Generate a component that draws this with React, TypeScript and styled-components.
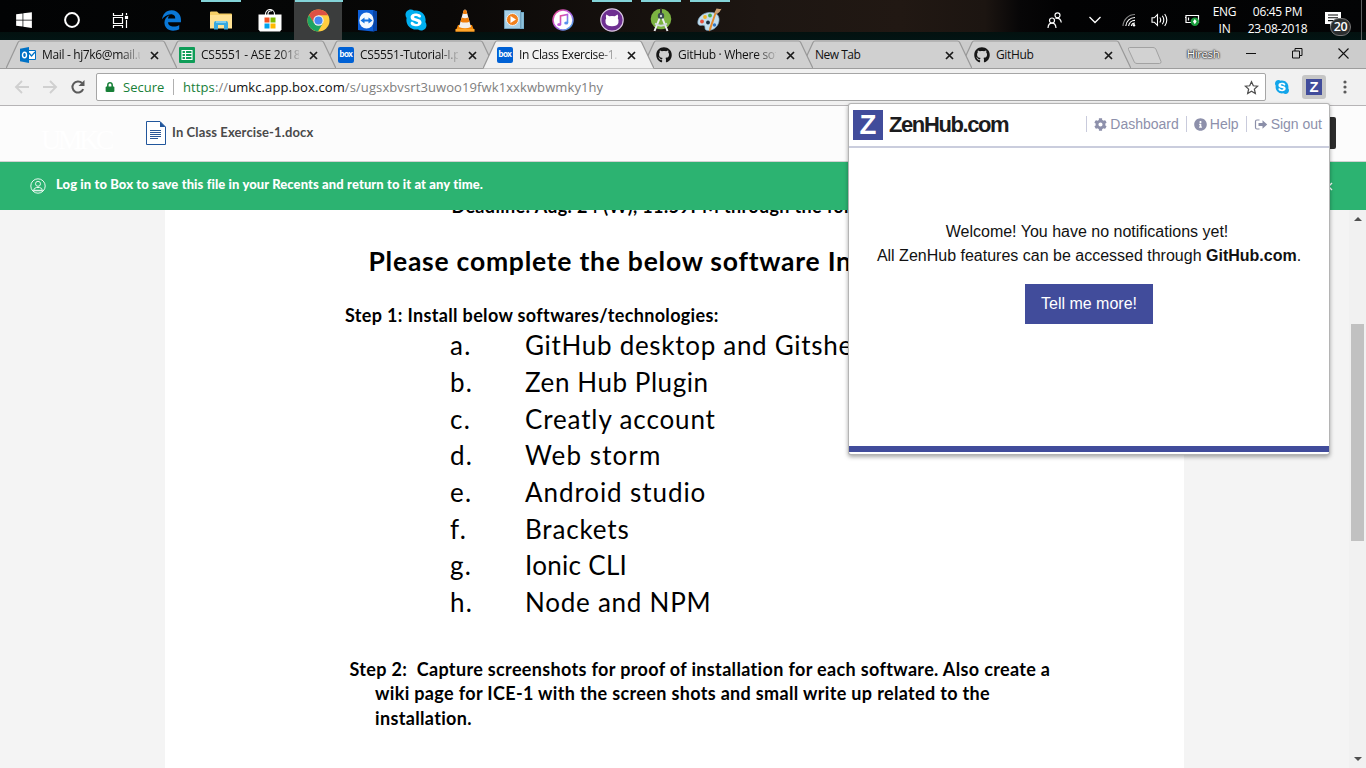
import React from 'react';
import styled, { createGlobalStyle } from 'styled-components';
import { FaGithub, FaSkype, FaEdgeLegacy, FaWindows, FaCog, FaInfoCircle, FaLock } from 'react-icons/fa';

const UI_FONT = "'Open Sans', 'Noto Sans', sans-serif";
const DOC_FONT = "Lato, 'Open Sans', sans-serif";
const POPUP_FONT = "'Liberation Sans', Arial, sans-serif";

const GlobalStyle = createGlobalStyle`
  * { box-sizing: border-box; }
  html, body { margin: 0; padding: 0; overflow: hidden; }
  svg { display: block; flex: none; }
`;

const Screen = styled.div`
  position: relative;
  width: 1366px;
  height: 768px;
  overflow: hidden;
  display: flex;
  flex-direction: column;
  background: #f4f4f4;
`;

/* ---------- Taskbar ---------- */

const Taskbar = styled.div`
  height: 40px;
  flex: none;
  display: flex;
  background:
    linear-gradient(#03110f, #021413) 0 32px / 100% 8px no-repeat,
    linear-gradient(90deg, #020304 0, #050606 300px, #0a0807 450px, #15100d 620px, #1d1612 760px, #211813 900px, #1c1511 985px, #070607 1020px, #020203 1060px, #030405 100%);
`;

const TaskButton = styled.div<{ $w?: number; $gap?: number; $active?: boolean }>`
  width: ${(p) => p.$w ?? 48.9}px;
  flex: none;
  margin-left: ${(p) => p.$gap ?? 0}px;
  height: 40px;
  display: flex;
  flex-direction: column;
  align-items: center;
  background: ${(p) => (p.$active ? 'linear-gradient(90deg, #3b3d3d 48px, transparent 48px)' : 'none')};
`;

const RunningMark = styled.div<{ $on?: boolean; $full?: boolean }>`
  width: ${(p) => (p.$full ? 48 : 40)}px;
  height: 2px;
  background: ${(p) => (p.$on ? '#83d3d8' : 'transparent')};
`;

const TaskIcon = styled.div`
  flex: 1;
  display: flex;
  align-items: center;
  padding-bottom: 2px;
`;

const Tray = styled.div`
  margin-left: auto;
  width: 331px;
  display: flex;
  align-items: center;
  color: #fff;
`;

const TraySlot = styled.div<{ $w: number }>`
  width: ${(p) => p.$w}px;
  display: flex;
  justify-content: center;
`;

const TrayText = styled.div<{ $w: number; $ls: number }>`
  width: ${(p) => p.$w}px;
  font: 12px/17px ${UI_FONT};
  letter-spacing: ${(p) => p.$ls}px;
  text-align: center;
  white-space: nowrap;
  padding-bottom: 1px;
`;

const Notify = styled.div`
  position: relative;
  width: 43px;
  height: 40px;
  padding: 12px 0 0 10px;
`;

const Badge = styled.div`
  position: absolute;
  left: 15px;
  top: 18px;
  width: 21px;
  height: 18px;
  border: 1px solid #777;
  border-radius: 9px;
  background: #2b2e2f;
  color: #fff;
  font: 600 12.5px/16px ${UI_FONT};
  letter-spacing: -0.3px;
  text-align: center;
`;

const ShowDesktop = styled.div`
  width: 5px;
  height: 40px;
  margin-left: auto;
  border-left: 1px solid #5b5f60;
`;

/* ---------- Browser tabs ---------- */

const TabStrip = styled.div`
  height: 29px;
  flex: none;
  display: flex;
  padding-left: 6px;
  background: linear-gradient(transparent 28px, #9d9d9d 28px), #cccccc;
`;

const TabBox = styled.div<{ $z: number }>`
  position: relative;
  z-index: ${(p) => p.$z};
  width: 171px;
  height: 29px;
  margin-right: -12px;
  flex: none;
  display: flex;
  align-items: center;
  padding: 1px 0 0 14px;
`;

const TabShape = styled.svg`
  position: absolute;
  inset: 0;
  z-index: -1;
`;

const TabTitle = styled.div<{ $noIcon?: boolean; $fade?: boolean; $ls?: number }>`
  width: ${(p) => (p.$noIcon ? 119 : 98)}px;
  margin-left: ${(p) => (p.$noIcon ? 0 : 6)}px;
  overflow: hidden;
  white-space: nowrap;
  font: 12px/18px ${UI_FONT};
  letter-spacing: ${(p) => p.$ls ?? -0.25}px;
  color: #111;
  mask-image: ${(p) => (p.$fade ? 'linear-gradient(90deg, #000 78px, transparent 101px)' : 'none')};
`;

const TabClose = styled.svg`
  margin-left: auto;
  margin-right: 18.5px;
`;

const BoxLogo = styled.div`
  width: 16px;
  height: 16px;
  border-radius: 2px;
  background: #0061d5;
  color: #fff;
  font: 900 8.5px/14px ${DOC_FONT};
  letter-spacing: -0.3px;
  text-align: center;
`;

const WindowControls = styled.div`
  margin-left: auto;
  display: flex;
  align-items: center;
  height: 28px;
  padding: 0 18px 1px 0;
`;

const ProfileName = styled.div`
  width: 40px;
  margin-right: 23px;
  font: 11.5px/16px ${UI_FONT};
  letter-spacing: -0.4px;
  text-align: center;
  color: #fff;
  text-shadow: 0 0 2px #222, 0 0 2px #222, 0 0 1px #222;
`;

const ControlSlot = styled.div<{ $w: number }>`
  width: ${(p) => p.$w}px;
  display: flex;
  justify-content: center;
`;

/* ---------- Browser toolbar ---------- */

const Toolbar = styled.div`
  height: 37px;
  flex: none;
  display: flex;
  align-items: center;
  background: #f1f1f1;
  border-bottom: 1px solid #b6b4b6;
`;

const NavButtons = styled.div`
  width: 96px;
  display: flex;
  align-items: center;
  gap: 12px;
  padding-left: 14px;
`;

const AddressBar = styled.div`
  width: 1170px;
  height: 28px;
  display: flex;
  align-items: center;
  border: 1px solid #a6a6a6;
  border-radius: 2px;
  background: #fff;
  padding: 0 6px 0 8px;
  font: 13px/20px ${UI_FONT};
`;

const Secure = styled.span`
  margin-left: 8px;
  width: 50px;
  color: #188038;
`;

const Url = styled.span`
  flex: 1;
  border-left: 1px solid #b0b0b0;
  line-height: 16px;
  padding-left: 9px;
  color: #808080;
  letter-spacing: 0.1px;
  white-space: nowrap;
`;

const UrlScheme = styled.span`
  color: #188038;
`;

const UrlHost = styled.span`
  color: #111;
`;

const Extensions = styled.div`
  display: flex;
  align-items: center;
  padding-left: 8px;
`;

const ZenButton = styled.div`
  width: 24px;
  height: 24px;
  margin: 0 17px 0 12px;
  border-radius: 3px;
  background: #c6c6c6;
  display: flex;
  align-items: center;
  justify-content: center;
`;

const ZenLogo = styled.div<{ $size: number }>`
  width: ${(p) => p.$size}px;
  height: ${(p) => p.$size}px;
  background: #414c9b;
  color: #fff;
  font: bold ${(p) => p.$size * 0.92}px/${(p) => p.$size}px ${POPUP_FONT};
  text-align: center;
`;

/* ---------- File viewer ---------- */

const FileHeader = styled.div`
  height: 56px;
  flex: none;
  display: flex;
  align-items: center;
  padding: 0 30px 1px 41px;
  background: #fcfcfc;
  border-bottom: 1px solid #d2d2d2;
`;

const Wordmark = styled.div`
  width: 105px;
  padding-top: 14px;
  font: 28px/28px 'Liberation Serif', serif;
  letter-spacing: -3.5px;
  color: #fff;
`;

const FileName = styled.div`
  margin-left: 6px;
  padding-bottom: 2px;
  font: bold 13px/18px ${DOC_FONT};
  letter-spacing: 0.12px;
  color: #4a4a4a;
`;

const HeaderAction = styled.div`
  width: 60px;
  height: 32px;
  margin-left: auto;
  border-radius: 2px;
  background: #2c2c2c;
`;

const LoginBanner = styled.div`
  height: 48px;
  flex: none;
  display: flex;
  align-items: center;
  padding: 0 33px 0 30px;
  background: #2cb371;
  color: #fff;
`;

const BannerText = styled.div`
  flex: 1;
  margin-left: 10px;
  padding-bottom: 4px;
  font: 900 13px/18px ${DOC_FONT};
  letter-spacing: 0.1px;
`;

const Viewer = styled.div`
  height: 558px;
  flex: none;
  display: flex;
  padding-left: 165px;
  overflow: hidden;
`;

const Page = styled.div`
  width: 1019px;
  height: 558px;
  overflow: hidden;
  background: #fff;
  color: #000;
  font-family: ${DOC_FONT};
`;

const Strong = styled.div<{ $left: number; $top?: number }>`
  margin: ${(p) => p.$top ?? 0}px 0 0 ${(p) => p.$left}px;
  font-size: 18px;
  font-weight: bold;
  line-height: 24.5px;
  letter-spacing: 0.34px;
  white-space: pre;
`;

const Heading = styled.div`
  margin: 26px 0 0 203.5px;
  font-size: 26.5px;
  font-weight: bold;
  line-height: 32px;
  letter-spacing: 0.76px;
  white-space: nowrap;
`;

const Item = styled.div`
  display: flex;
  margin-left: 285px;
  font-size: 26px;
  line-height: 36.68px;
  white-space: nowrap;
`;

const Letter = styled.span`
  width: 75px;
  letter-spacing: 1.2px;
`;

const ItemText = styled.span<{ $ls: number }>`
  letter-spacing: ${(p) => p.$ls}px;
`;

const Scrollbar = styled.div`
  width: 17px;
  margin-left: auto;
  display: flex;
  flex-direction: column;
  align-items: center;
  justify-content: space-between;
  background: #f1f1f1;
  padding: 7px 0;
`;

const Thumb = styled.div`
  width: 13px;
  height: 217px;
  margin: 103px 0 216px;
  background: #c1c1c1;
`;

/* ---------- ZenHub popup ---------- */

const Popup = styled.div`
  position: absolute;
  z-index: 20;
  left: 849px;
  top: 104px;
  width: 480px;
  height: 350px;
  display: flex;
  flex-direction: column;
  background: #fff;
  border-radius: 2px;
  box-shadow: 0 0 0 1px #b4b4b4, 0 2px 4px 1px rgba(0, 0, 0, 0.35);
  font-family: ${POPUP_FONT};
`;

const PopupHeader = styled.div`
  height: 44px;
  display: flex;
  align-items: center;
  padding: 0 7px 0 4px;
  border-bottom: 2px solid #cacddd;
`;

const Brand = styled.div`
  margin-left: 6px;
  flex: 1;
  font-size: 22px;
  line-height: 30px;
  font-weight: bold;
  letter-spacing: -1.4px;
  color: #1c1c1e;
`;

const PopupLink = styled.div`
  display: flex;
  align-items: center;
  gap: 3px;
  height: 16px;
  margin: 0 0 2px 7px;
  padding-left: 7px;
  border-left: 1px solid #c9cbdc;
  font-size: 14px;
  color: #8d90ab;
  white-space: nowrap;
`;

const PopupBody = styled.div`
  flex: 1;
  display: flex;
  flex-direction: column;
  align-items: center;
  padding-top: 72px;
  font-size: 16px;
  line-height: 24px;
  color: #111;
`;

const Welcome = styled.div`
  padding-right: 4px;
`;

const PopupButton = styled.div`
  width: 128px;
  height: 40px;
  margin-top: 16px;
  background: #414c9b;
  color: #fff;
  line-height: 39px;
  text-align: center;
`;

const PopupFooter = styled.div`
  height: 6px;
  margin-bottom: 2px;
  background: #414c9b;
`;

/* ---------- Icons ---------- */

const Cortana = () => (
  <svg width="18" height="18" viewBox="0 0 18 18"><circle cx="9" cy="9" r="6.9" fill="none" stroke="#fff" strokeWidth="2" /></svg>
);

const TaskView = () => (
  <svg width="17" height="17" viewBox="0 0 17 17" fill="none" stroke="#fff" strokeWidth="1.2">
    <path d="M1.5 1v2.500h9V1M1.500 16v-2.500h9V16M1.500 5.500h9v6h-9zM14.500 1v2M14.500 8v8" />
    <rect x="13.500" y="4.500" width="2" height="2" fill="#fff" />
  </svg>
);

const Explorer = () => (
  <svg width="22" height="19" viewBox="0 0 22 19">
    <path d="M0 1.500Q0 .5 1 .5h6l2 2h12q1 0 1 1V17H0z" fill="#f5cf66" />
    <path d="M0 4h22v13.500H0z" fill="#ffe293" />
    <path d="M4 18.500V12q0-2 2-2h10q2 0 2 2v6.500h-4V14H8v4.500z" fill="#36a9e0" />
    <path d="M6 10h10v2H6z" fill="#7bcdf0" />
  </svg>
);

const Store = () => (
  <svg width="24" height="23" viewBox="0 0 24 23">
    <path d="M7.500 7V5a4 4 0 0 1 9 0v2M10 7V4.500a3 3 0 0 1 4-2.500" fill="none" stroke="#fff" strokeWidth="1.100" />
    <path d="M.5 5.500h23V20.500l-1.500 2H2l-1.500-2z" fill="#fff" />
    <path d="M6.500 8.500h5v5h-5z" fill="#f25022" /><path d="M12.500 8.500h5v5h-5z" fill="#7fba00" />
    <path d="M6.500 14.500h5v5h-5z" fill="#00a4ef" /><path d="M12.500 14.500h5v5h-5z" fill="#ffb900" />
  </svg>
);

const Chrome = () => (
  <svg width="23" height="23" viewBox="0 0 24 24">
    <circle cx="12" cy="12" r="11.500" fill="#ffcd40" />
    <path d="M12 6.500h10.100A11.500 11.500 0 0 0 2.040 6.250L7.300 15z" fill="#dd5144" />
    <path d="M2.040 6.250A11.500 11.500 0 0 0 11.500 23.500L16.700 14.700H7.300z" fill="#1da462" />
    <circle cx="12" cy="12" r="5.400" fill="#f1f1f1" /><circle cx="12" cy="12" r="4.200" fill="#4688f1" />
  </svg>
);

const TeamViewer = () => (
  <svg width="21" height="23" viewBox="0 0 21 23">
    <path d="M1 1h15l4 1.500v19l-4 1L1 21z" fill="#0d5fd8" /><path d="M16 1l4 1.500v19l-4 1z" fill="#0745a8" />
    <ellipse cx="9.500" cy="11.500" rx="7.200" ry="8" fill="#f4f9ff" />
    <path d="M3.500 11.500l4-3v2h4v-2l4 3-4 3v-2h-4v2z" fill="#1271e0" />
  </svg>
);

const SkypeBacking = styled.div<{ $size: number }>`
  display: flex;
  justify-content: center;
  background: radial-gradient(circle, #fff ${(p) => p.$size * 0.36}px, transparent ${(p) => p.$size * 0.38}px);
`;

const Skype = ({ size, color }: { size: number; color: string }) => (
  <SkypeBacking $size={size}><FaSkype size={size} color={color} /></SkypeBacking>
);

const Vlc = () => (
  <svg width="20" height="23" viewBox="0 0 20 23">
    <path d="M3 16h14l2.500 6.500H.5z" fill="#f58a0c" /><path d="M.5 20h19v2.500H.5z" fill="#ffa62b" />
    <path d="M10 .5q1.200 0 1.600 1.500L16 18q-6 2.500-12 0L8.400 2Q8.800.5 10 .5z" fill="#f3f0ee" />
    <path d="M8.400 2q1.600-2.500 3.200 0l.6 2.500q-2.200 1-4.400 0zM6.700 8.500q3.300 1.500 6.600 0l1.200 4.200q-4.500 1.800-9 0z" fill="#ef7d0b" />
  </svg>
);

const Movies = () => (
  <svg width="20" height="20" viewBox="0 0 20 20">
    <path d="M4 2h16v17H4z" fill="#6ba5c4" /><path d="M.5 0.500h16v18H.5z" fill="#a8d0e6" stroke="#6f9fbb" />
    <path d="M18.500 3v15" stroke="#8fc0da" strokeWidth="2" />
    <circle cx="8.500" cy="9.500" r="6" fill="#f2811d" stroke="#e9f3f8" /><path d="M6.500 6l5.500 3.500-5.500 3.500z" fill="#fff" />
  </svg>
);

const ITunes = () => (
  <svg width="22" height="22" viewBox="0 0 22 22">
    <defs><linearGradient id="itunes" x1="0" y1="0" x2="1" y2="1"><stop stopColor="#ee4b8b" /><stop offset=".5" stopColor="#b55be0" /><stop offset="1" stopColor="#36b7ee" /></linearGradient></defs>
    <circle cx="11" cy="11" r="10" fill="#fff" stroke="url(#itunes)" strokeWidth="1.500" />
    <path d="M8.500 15.500V7l7-1.500V14" fill="none" stroke="url(#itunes)" strokeWidth="1.600" />
    <ellipse cx="7.200" cy="15.500" rx="2" ry="1.600" fill="#c057d8" /><ellipse cx="14.200" cy="14" rx="2" ry="1.600" fill="#5a8ff0" />
  </svg>
);

const GitHubDesktop = () => (
  <svg width="24" height="24" viewBox="0 0 24 24">
    <circle cx="12" cy="12" r="11.200" fill="#6e2f91" stroke="#d9c8e2" strokeWidth="1.200" />
    <path d="M6.300 6.500l3 1.800q2.700-.5 5.400 0l3-1.800q.8 2 .1 3.800 1.500 2 .6 4.700-1.300 3.200-6.400 3.200T5.600 15q-.9-2.700.6-4.700-.7-1.800.1-3.800z" fill="#fff" />
  </svg>
);

const AndroidStudio = () => (
  <svg width="22" height="24" viewBox="0 0 22 24">
    <circle cx="11" cy="11" r="10.300" fill="#7cb342" />
    <path d="M11 1v4" stroke="#333" strokeWidth="2" /><circle cx="11" cy="8" r="3.200" fill="#3b4a50" />
    <circle cx="11" cy="8" r="1.200" fill="#cfd8dc" />
    <path d="M9.500 10.500L4.500 23M12.500 10.500l5 12.500" stroke="#eceff1" strokeWidth="2" /><path d="M5 15.500q6 4.500 12 0" fill="none" stroke="#cfd8dc" strokeWidth="1.800" />
  </svg>
);

const Paint = () => (
  <svg width="25" height="24" viewBox="0 0 25 24">
    <path d="M12 4.500C5 5 .8 10 .8 14.500c0 3 2.500 3.200 4.800 2.800 2.400-.4 2.400 1.500 2.400 3 0 2.500 4 2.700 7.500 1.200C20 19.500 22.500 15 22 10.500 21.500 6 17.500 4 12 4.500z" fill="#c3deef" stroke="#7fa9c4" strokeWidth=".7" />
    <circle cx="5" cy="13.500" r="1.900" fill="#e8513d" /><circle cx="8" cy="9" r="1.900" fill="#f0b429" /><circle cx="13" cy="7.500" r="1.900" fill="#4bab46" />
    <circle cx="11" cy="14.500" r="1.900" fill="#1c2d3d" /><circle cx="17.500" cy="17" r="1.700" fill="#3276c4" />
    <path d="M19.500 5L14 21.500l-2 2 .3-3.500L18 4z" fill="#e2892c" /><path d="M17.500 4.500L19.500.5q3 .8 5 .2-1.500 3.500-4.500 5.300z" fill="#c9a075" />
  </svg>
);

const People = () => (
  <svg width="16" height="17" viewBox="0 0 16 17" fill="none" stroke="#fff" strokeWidth="1.200">
    <circle cx="5" cy="8.500" r="2.500" /><path d="M1 16q.3-4.800 4-4.800T9 16" /><circle cx="10.500" cy="3.300" r="2.500" /><path d="M8.500 6.300q5-.8 5.800 4.200" />
  </svg>
);

const Chevron = () => (
  <svg width="14" height="8" viewBox="0 0 14 8"><path d="M1.500 1L7 6.500 12.500 1" fill="none" stroke="#fff" strokeWidth="1.300" /></svg>
);

const Wifi = () => (
  <svg width="14" height="14" viewBox="0 0 14 14" fill="none" strokeWidth="1.100">
    <path d="M1 13A12 12 0 0 1 13 1.500" stroke="#888" /><path d="M3.800 13A9.200 9.200 0 0 1 13 4.500M6.600 13A6.400 6.400 0 0 1 13 7.400M9.300 13A3.700 3.700 0 0 1 13 10" stroke="#fff" />
    <circle cx="12" cy="12.300" r="1.200" fill="#fff" />
  </svg>
);

const Volume = () => (
  <svg width="17" height="14" viewBox="0 0 17 14" fill="none" stroke="#fff" strokeWidth="1.100">
    <path d="M1 4.800h2.300L6.500 1.500v11L3.300 9.200H1zM8.800 4.500q1.800 2.500 0 5M11.300 2.800q3 4.200 0 8.400M13.700 1q4.200 6 0 12" />
  </svg>
);

const Battery = () => (
  <svg width="16" height="14" viewBox="0 0 16 14">
    <path d="M2 2.500h12.500v7H2zM1 4.500h1M4.500 4.500v3" fill="none" stroke="#fff" strokeWidth="1.200" />
    <circle cx="10.800" cy="8.800" r="4.200" fill="#1a9c3c" /><path d="M10.800 6l1.800 2.500-1.800 2.800L9 8.500z" fill="#fff" />
  </svg>
);

const Message = () => (
  <svg width="16" height="15" viewBox="0 0 16 15">
    <path d="M0 0h16v12H8l-3 3v-3H0z" fill="#fff" /><path d="M3 3h10M3 5.800h10M3 8.600h7" stroke="#0a0c0d" strokeWidth="1.100" />
  </svg>
);

const Outlook = () => (
  <svg width="16" height="16" viewBox="0 0 16 16">
    <path d="M8 3.500h7.500v9H8z" fill="#fff" stroke="#0072c6" /><path d="M9 6l2.500 3 3.500-4" fill="none" stroke="#0072c6" strokeWidth="1.200" />
    <path d="M0 1.800L9 0v16L0 14.200z" fill="#0072c6" /><ellipse cx="4.500" cy="8" rx="2" ry="2.700" fill="none" stroke="#fff" strokeWidth="1.400" />
  </svg>
);

const Sheets = () => (
  <svg width="16" height="16" viewBox="0 0 16 16">
    <rect width="16" height="16" rx="1" fill="#0f9d58" /><path d="M3 3.500h10v9H3zM3 6.500h10M3 9.500h10M6.500 3.500v9" fill="none" stroke="#fff" strokeWidth="1.100" />
  </svg>
);

const ArrowLeft = ({ flip }: { flip?: boolean }) => (
  <svg width="16" height="14" viewBox="0 0 16 14" fill="none" stroke="#d0d0d0" strokeWidth="1.900">
    <path d={flip ? 'M1 7h12.500M8 1l6 6-6 6' : 'M15 7H2.500M8 1L2 7l6 6'} />
  </svg>
);

const Reload = () => (
  <svg width="16" height="16" viewBox="0 0 16 16">
    <path d="M13.200 10.200A5.600 5.600 0 1 1 12 4" fill="none" stroke="#5a5a5a" strokeWidth="2" /><path d="M14.500 1v6h-6z" fill="#5a5a5a" />
  </svg>
);

const Star = () => (
  <svg width="15" height="15" viewBox="0 0 24 24"><path d="M12 2.800l2.900 6.400 6.900.7-5.200 4.700 1.500 6.900L12 18l-6.100 3.500 1.500-6.900L2.200 9.900l6.900-.7z" fill="none" stroke="#4d4d4d" strokeWidth="2" /></svg>
);

const MenuDots = () => (
  <svg width="4" height="14" viewBox="0 0 4 14" fill="#5a5a5a"><circle cx="2" cy="2" r="1.600" /><circle cx="2" cy="7" r="1.600" /><circle cx="2" cy="12" r="1.600" /></svg>
);

const DocIcon = () => (
  <svg width="20" height="24" viewBox="0 0 20 24">
    <path d="M.5.500H14L19.500 6v17.500H.5z" fill="#fff" stroke="#21569c" /><path d="M14 .5L19.500 6H14z" fill="#21569c" />
    <path d="M4 9.500h11M4 11.500h11M4 13.500h11M4 15.500h11M4 17.500h8" stroke="#2b5797" />
  </svg>
);

const UserCircle = () => (
  <svg width="16" height="16" viewBox="0 0 16 16" fill="none" stroke="#e9f8f0" strokeWidth="1">
    <circle cx="8" cy="8" r="7.200" /><circle cx="8" cy="5.800" r="2.500" /><path d="M3.500 12.800q.2-3 3-3.300h3q2.800.3 3 3.300zM4 12.300h8" />
  </svg>
);

const SignOutIcon = () => (
  <svg width="14" height="11" viewBox="0 0 13 11"><path d="M5 1H2.500Q1 1 1 2.500v6Q1 10 2.500 10H5" fill="none" stroke="#8b8fa9" strokeWidth="1.200" /><path d="M4 4h4V1.200l4.700 4.300L8 9.800V7H4z" fill="#8b8fa9" /></svg>
);

const Triangle = ({ down }: { down?: boolean }) => (
  <svg width="8" height="4" viewBox="0 0 8 4"><path d={down ? 'M0 0h8L4 4z' : 'M0 4h8L4 0z'} fill="#505050" /></svg>
);

/* ---------- Data ---------- */

const apps = [
  { icon: <FaEdgeLegacy size={21} color="#0a78d7" /> },
  { icon: <Explorer />, running: true },
  { icon: <Store /> },
  { icon: <Chrome />, running: true, active: true },
  { icon: <TeamViewer /> },
  { icon: <Skype size={24} color="#00aff0" /> },
  { icon: <Vlc /> },
  { icon: <Movies /> },
  { icon: <ITunes /> },
  { icon: <GitHubDesktop />, running: true },
  { icon: <AndroidStudio />, running: true },
  { icon: <Paint />, running: true },
];

const tabs = [
  { title: 'Mail - hj7k6@mail.umkc', icon: <Outlook />, fade: true, ls: -0.35 },
  { title: 'CS5551 - ASE 2018 F', icon: <Sheets />, fade: true, ls: -0.22 },
  { title: 'CS5551-Tutorial-I.pdf', icon: <BoxLogo>box</BoxLogo>, fade: true, ls: -0.32 },
  { title: 'In Class Exercise-1.docx', icon: <BoxLogo>box</BoxLogo>, fade: true, active: true, ls: -0.36 },
  { title: 'GitHub · Where software', icon: <FaGithub size={16} color="#161616" />, fade: true, ls: -0.3 },
  { title: 'New Tab', ls: -0.5 },
  { title: 'GitHub', icon: <FaGithub size={16} color="#161616" />, ls: -0.35 },
];

const software = [
  { text: 'GitHub desktop and Gitshell', ls: 0.7 },
  { text: 'Zen Hub Plugin', ls: 0.57 },
  { text: 'Creatly account', ls: 0.87 },
  { text: 'Web storm', ls: 1.1 },
  { text: 'Android studio', ls: 0.92 },
  { text: 'Brackets', ls: 0.85 },
  { text: 'Ionic CLI', ls: 0.3 },
  { text: 'Node and NPM', ls: 0.75 },
];

function BrowserTab({ tab, index }: { tab: any; index: number }) {
  return (
    <TabBox $z={tab.active ? 12 : 10 - index}>
      <TabShape width="171" height="29">
        <path d="M0 28.500L12 2.500Q12.700 1 14 1H156.500Q158 1 158.700 2.500L171 28.500z" fill={tab.active ? '#f1f1f1' : '#d0d0d0'} />
        <path
          d="M0 28.500L12 2.500Q12.700 1 14 1H156.500Q158 1 158.700 2.500L171 28.500"
          fill="none"
          stroke="#999"
          strokeWidth="1.200"
        />
        {!tab.active && <path d="M0 28.500H171" stroke="#9d9d9d" />}
      </TabShape>
      {tab.icon}
      <TabTitle $noIcon={!tab.icon} $fade={tab.fade} $ls={tab.ls}>{tab.title}</TabTitle>
      <TabClose width="9" height="9" viewBox="0 0 9 9">
        <path d="M1 1l7 7M8 1L1 8" stroke="#1a1a1a" strokeWidth="1.700" />
      </TabClose>
    </TabBox>
  );
}

export default function App() {
  return (
    <Screen>
      <GlobalStyle />
      <Taskbar>
        {[<FaWindows size={18} color="#fff" />, <Cortana />, <TaskView />].map((icon, i) => (
          <TaskButton key={i} $w={48}>
            <RunningMark />
            <TaskIcon>{icon}</TaskIcon>
          </TaskButton>
        ))}
        {apps.map((app, i) => (
          <TaskButton key={i} $gap={i === 0 ? 3.4 : 0} $active={app.active}>
            <RunningMark $on={app.running} $full={app.active} />
            <TaskIcon>{app.icon}</TaskIcon>
          </TaskButton>
        ))}
        <Tray>
          <TraySlot $w={40}><People /></TraySlot>
          <TraySlot $w={40}><Chevron /></TraySlot>
          <TraySlot $w={28}><Wifi /></TraySlot>
          <TraySlot $w={32}><Volume /></TraySlot>
          <TraySlot $w={34}><Battery /></TraySlot>
          <TrayText $w={31} $ls={-0.3}>ENG<br />IN</TrayText>
          <TrayText $w={75} $ls={-0.3}>06:45 PM<br />23-08-2018</TrayText>
          <Notify>
            <Message />
            <Badge>20</Badge>
          </Notify>
          <ShowDesktop />
        </Tray>
      </Taskbar>

      <TabStrip>
        {tabs.map((tab, i) => <BrowserTab key={i} tab={tab} index={i} />)}
        <svg width="52" height="28" viewBox="0 0 52 28">
          <path d="M10.500 7.500H34Q36 7.500 36.800 9L42 21.500Q42.300 23.500 40.500 23.500H18Q16 23.500 15.300 22L9.500 9.500Q9 7.500 10.500 7.500z" fill="#d2d2d2" stroke="#a2a2a2" />
        </svg>
        <WindowControls>
          <ProfileName>Hiresh</ProfileName>
          <ControlSlot $w={10}><svg width="10" height="1"><path d="M0 .5h10" stroke="#111" /></svg></ControlSlot>
          <ControlSlot $w={82}>
            <svg width="11" height="11" fill="none" stroke="#111"><path d="M.5 3h7v7h-7zM3 3V.5h7v7H7.500" /></svg>
          </ControlSlot>
          <ControlSlot $w={10}>
            <svg width="11" height="11" stroke="#111" strokeWidth="1.100"><path d="M.5.500l10 10M10.500.500l-10 10" /></svg>
          </ControlSlot>
        </WindowControls>
      </TabStrip>

      <Toolbar>
        <NavButtons>
          <ArrowLeft />
          <ArrowLeft flip />
          <Reload />
        </NavButtons>
        <AddressBar>
          <FaLock size={10} color="#188038" />
          <Secure>Secure</Secure>
          <Url>
            <UrlScheme>https</UrlScheme>://<UrlHost>umkc.app.box.com</UrlHost>/s/ugsxbvsrt3uwoo19fwk1xxkwbwmky1hy
          </Url>
          <Star />
        </AddressBar>
        <Extensions>
          <Skype size={16} color="#12a5ea" />
          <ZenButton><ZenLogo $size={16}>Z</ZenLogo></ZenButton>
          <MenuDots />
        </Extensions>
      </Toolbar>

      <FileHeader>
        <Wordmark>UMKC</Wordmark>
        <DocIcon />
        <FileName>In Class Exercise-1.docx</FileName>
        <HeaderAction />
      </FileHeader>

      <LoginBanner>
        <UserCircle />
        <BannerText>Log in to Box to save this file in your Recents and return to it at any time.</BannerText>
        <svg width="9" height="9" viewBox="0 0 9 9"><path d="M1 1l7 7M8 1L1 8" stroke="#fff" strokeWidth="1.400" /></svg>
      </LoginBanner>

      <Viewer>
        <Page>
          <Strong $left={286.5} $top={-16}>Deadline: Aug. 24 (W), 11:59PM through the form</Strong>
          <Heading>Please complete the below software Installations</Heading>
          <Strong $left={180} $top={26.3}>Step 1: Install below softwares/technologies:</Strong>
          {software.map((item, i) => (
            <Item key={i}>
              <Letter>{'abcdefgh'[i]}.</Letter>
              <ItemText $ls={item.ls}>{item.text}</ItemText>
            </Item>
          ))}
          <Strong $left={184.5} $top={36}>Step 2:  Capture screenshots for proof of installation for each software. Also create a</Strong>
          <Strong $left={210}>wiki page for ICE-1 with the screen shots and small write up related to the</Strong>
          <Strong $left={210}>installation.</Strong>
        </Page>
        <Scrollbar>
          <Triangle />
          <Thumb />
          <Triangle down />
        </Scrollbar>
      </Viewer>

      <Popup>
        <PopupHeader>
          <ZenLogo $size={30}>Z</ZenLogo>
          <Brand>ZenHub.com</Brand>
          <PopupLink><FaCog size={13} />Dashboard</PopupLink>
          <PopupLink><FaInfoCircle size={13} />Help</PopupLink>
          <PopupLink><SignOutIcon />Sign out</PopupLink>
        </PopupHeader>
        <PopupBody>
          <Welcome>Welcome! You have no notifications yet!</Welcome>
          <div>All ZenHub features can be accessed through <b>GitHub.com</b>.</div>
          <PopupButton>Tell me more!</PopupButton>
        </PopupBody>
        <PopupFooter />
      </Popup>
    </Screen>
  );
}
